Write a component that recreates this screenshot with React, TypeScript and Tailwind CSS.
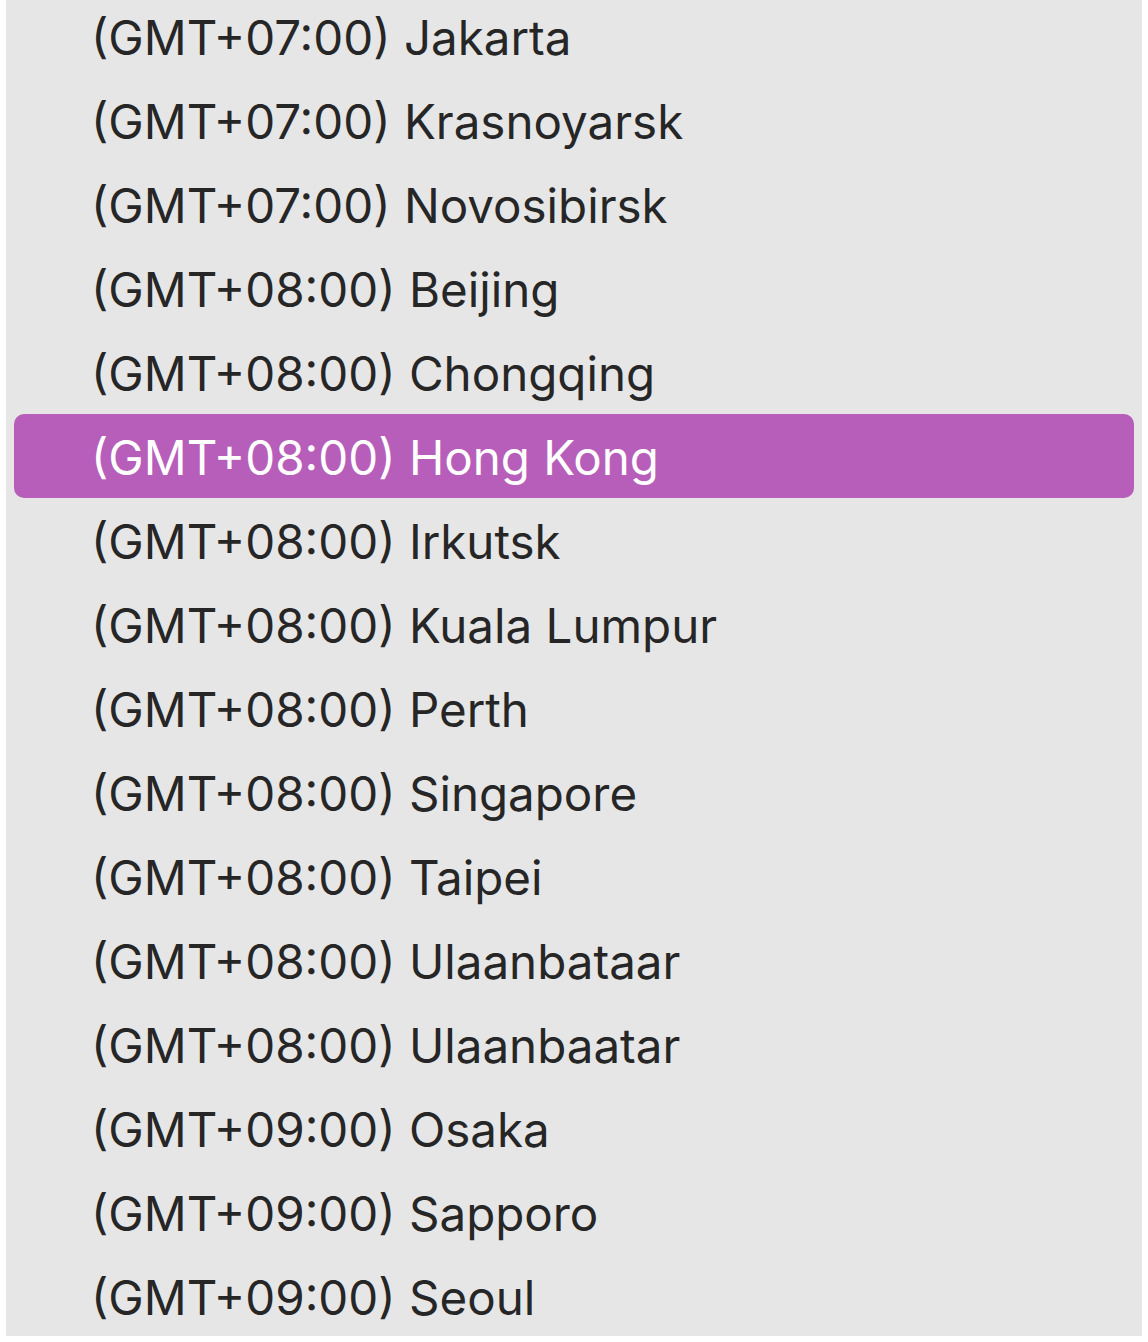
const zones = [
  "(GMT+07:00) Jakarta",
  "(GMT+07:00) Krasnoyarsk",
  "(GMT+07:00) Novosibirsk",
  "(GMT+08:00) Beijing",
  "(GMT+08:00) Chongqing",
  "(GMT+08:00) Hong Kong",
  "(GMT+08:00) Irkutsk",
  "(GMT+08:00) Kuala Lumpur",
  "(GMT+08:00) Perth",
  "(GMT+08:00) Singapore",
  "(GMT+08:00) Taipei",
  "(GMT+08:00) Ulaanbataar",
  "(GMT+08:00) Ulaanbaatar",
  "(GMT+09:00) Osaka",
  "(GMT+09:00) Sapporo",
  "(GMT+09:00) Seoul",
];

const selected = "(GMT+08:00) Hong Kong";

export default function App() {
  return (
    <div className="h-[1342px] w-[1148px] bg-white pl-[6px] pr-[6px] pb-[6px]">
      <div className="h-full overflow-hidden bg-[#e6e6e6] px-[8px]">
        <ul className="-mt-[6px]" style={{ fontFamily: "Inter, 'Noto Sans', sans-serif" }}>
          {zones.map((zone) => {
            const active = zone === selected;
            return (
              <li
                key={zone}
                className={
                  active
                    ? "flex h-[84px] items-center rounded-[10px] bg-[#b75eba] pt-[3px] pl-[77px] text-[47.5px] text-white"
                    : "flex h-[84px] items-center pt-[3px] pl-[77px] text-[47.5px] text-[#262626]"
                }
              >
                {zone}
              </li>
            );
          })}
        </ul>
      </div>
    </div>
  );
}
